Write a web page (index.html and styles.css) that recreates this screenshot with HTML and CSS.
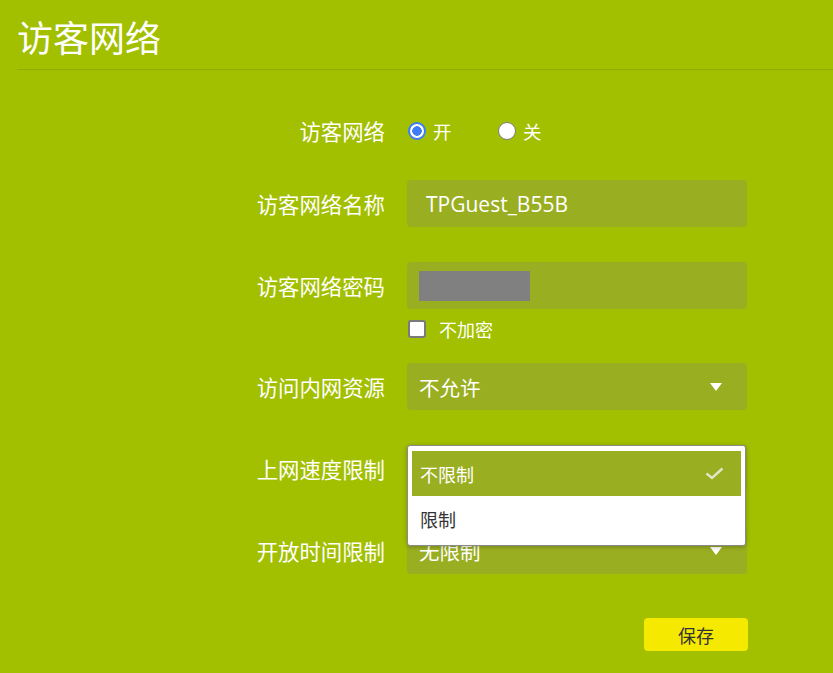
FILE: index.html
```html
<!DOCTYPE html>
<html lang="zh-CN">
<head>
<meta charset="utf-8">
<title>访客网络</title>
<link rel="stylesheet" href="styles.css">
</head>
<body>
<div class="page">
  <header class="header">
    <h1 class="title">访客网络</h1>
  </header>
  <div class="form">
    <div class="row row-radio">
      <div class="label">访客网络</div>
      <div class="control radios">
        <span class="radio checked"></span><span class="radio-text">开</span>
        <span class="radio"></span><span class="radio-text">关</span>
      </div>
    </div>
    <div class="row row-gap1">
      <div class="label">访客网络名称</div>
      <div class="control field"><span class="value latin">TPGuest_B55B</span></div>
    </div>
    <div class="row row-gap2">
      <div class="label">访客网络密码</div>
      <div class="control field"><span class="mask"></span></div>
    </div>
    <div class="check-row">
      <span class="checkbox"></span><span class="check-text">不加密</span>
    </div>
    <div class="row row-gap3">
      <div class="label">访问内网资源</div>
      <div class="control field select"><span class="value">不允许</span><span class="arrow"></span></div>
    </div>
    <div class="row row-gap2">
      <div class="label">上网速度限制</div>
      <div class="control field select">
        <span class="arrow"></span>
        <div class="dropdown">
          <div class="option selected"><span>不限制</span>
            <svg class="tick" width="19" height="13" viewBox="0 0 19 13"><path d="M1.5 6.5 L7 11 L17.5 1.5" fill="none" stroke="#e2e6c8" stroke-width="2.4"/></svg>
          </div>
          <div class="option">限制</div>
        </div>
      </div>
    </div>
    <div class="row row-gap2">
      <div class="label">开放时间限制</div>
      <div class="control field select"><span class="value">无限制</span><span class="arrow"></span></div>
    </div>
    <div class="actions">
      <button class="save">保存</button>
    </div>
  </div>
</div>
</body>
</html>
```

FILE: styles.css
```css
html, body {
  margin: 0;
  padding: 0;
  background: #a2bf00;
}
body {
  font-family: "Open Sans", "Noto Sans CJK SC", sans-serif;
  color: #ffffff;
}
.page {
  width: 833px;
  height: 673px;
  overflow: hidden;
}
.header {
  margin-left: 17px;
  height: 70px;
  border-bottom: 1px solid #92ad00;
  box-sizing: border-box;
}
.title {
  margin: 0;
  padding-top: 13px;
  font-family: "Noto Sans CJK SC", sans-serif;
  font-size: 36px;
  font-weight: 400;
  line-height: 46px;
  color: #ffffff;
}
.form {
  padding-top: 37px;
}
.row {
  display: flex;
  align-items: center;
  height: 47px;
}
.row-gap1 { margin-top: 26px; }
.row-gap2 { margin-top: 35px; }
.row-gap3 { margin-top: 25px; }
.label {
  width: 407px;
  padding-right: 22px;
  box-sizing: border-box;
  text-align: right;
  font-family: "Noto Sans CJK SC", sans-serif;
  font-size: 21.4px;
  line-height: 28px;
  color: #ffffff;
}
.control {
  width: 340px;
  height: 47px;
  box-sizing: border-box;
  position: relative;
}
.radios {
  display: flex;
  align-items: center;
  padding-left: 1px;
}
.radio {
  width: 18px;
  height: 18px;
  border-radius: 50%;
  background: #ffffff;
  border: 1px solid #7b7b7b;
  box-sizing: border-box;
}
.radio.checked {
  border: 2px solid #3f7df5;
  background: radial-gradient(circle, #3f7df5 0 4.5px, #ffffff 5px);
}
.radio-text {
  font-family: "Noto Sans CJK SC", sans-serif;
  font-size: 18.5px;
  margin-left: 7px;
  width: 65px;
}
.field {
  background: #9aae22;
  border-radius: 4px;
  display: flex;
  align-items: center;
  padding-left: 12px;
}
.value {
  font-family: "Noto Sans CJK SC", sans-serif;
  font-size: 20.5px;
  line-height: 28px;
  color: #ffffff;
}
.latin {
  font-family: "Open Sans", "Noto Sans CJK SC", sans-serif;
  font-size: 21px;
  padding-left: 7px;
}
.mask {
  display: block;
  width: 111px;
  height: 30px;
  background: #808080;
}
.check-row {
  display: flex;
  align-items: center;
  margin-top: 11px;
  margin-left: 408px;
  height: 18px;
}
.checkbox {
  width: 18px;
  height: 18px;
  box-sizing: border-box;
  background: #ffffff;
  border: 2px solid #7a7a7a;
  border-radius: 3px;
}
.check-text {
  margin-left: 13px;
  font-family: "Noto Sans CJK SC", sans-serif;
  font-size: 18px;
}
.select {
  justify-content: space-between;
  padding-right: 25px;
}
.select > .arrow:first-child {
  margin-left: auto;
}
.arrow {
  width: 0;
  height: 0;
  border-left: 6.5px solid transparent;
  border-right: 6.5px solid transparent;
  border-top: 8px solid #ffffff;
}
.dropdown {
  position: absolute;
  top: 0;
  left: 0;
  width: 339px;
  box-sizing: border-box;
  background: #ffffff;
  border: 1px solid #8a8a8a;
  border-radius: 3px;
  padding: 5px 4px 4px;
  box-shadow: 0 1px 4px rgba(0, 0, 0, 0.25);
  z-index: 5;
}
.option {
  height: 45px;
  display: flex;
  align-items: center;
  justify-content: space-between;
  padding: 0 17px 0 8px;
  font-family: "Noto Sans CJK SC", sans-serif;
  font-size: 18px;
  color: #333333;
}
.option.selected {
  background: #9aae22;
  color: #ffffff;
}
.actions {
  margin-top: 44px;
  margin-left: 644px;
}
.save {
  width: 104px;
  height: 33px;
  border: none;
  border-radius: 4px;
  background: #f6e900;
  color: #333333;
  font-family: "Noto Sans CJK SC", sans-serif;
  font-size: 18px;
  padding: 0;
}
```
